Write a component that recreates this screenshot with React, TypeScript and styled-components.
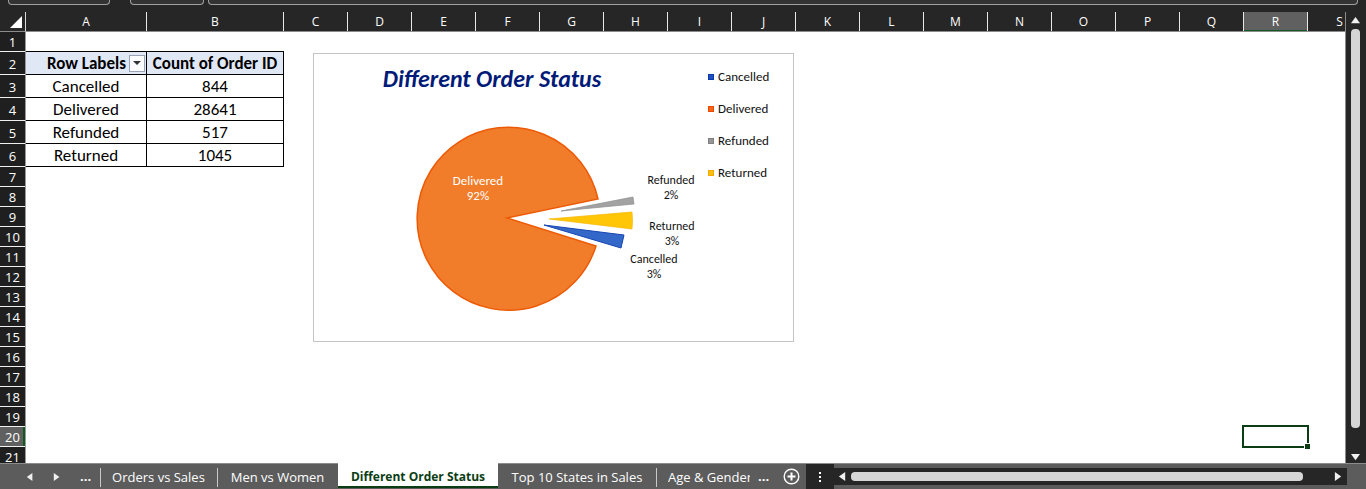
import React from 'react';
import styled, { createGlobalStyle } from 'styled-components';

const CALIBRI = "Calibri, Carlito, Lato, sans-serif";
const SEGOE = "'Segoe UI', 'Open Sans', 'Noto Sans', sans-serif";

const GlobalStyle = createGlobalStyle`
  *, *::before, *::after { box-sizing: border-box; }
  body { margin: 0; background: #262626; overflow: hidden; }
  button { font: inherit; color: inherit; border: 0; padding: 0; background: none; }
`;

const Window = styled.div`
  display: flex;
  flex-direction: column;
  height: 100vh;
  overflow: hidden;
  background: #262626;
  color: #fff;
  font-family: ${SEGOE};
`;

const FormulaBar = styled.header`
  display: flex;
  flex: none;
  height: 12px;
  padding: 0 8px 7px;
`;

const FormulaBox = styled.div<{ $width?: number; $gap?: number }>`
  flex: ${p => (p.$width ? `0 0 ${p.$width}px` : '1')};
  margin-right: ${p => p.$gap ?? 0}px;
  border: 1px solid #a0a0a0;
  border-top: 0;
  border-radius: 0 0 4px 4px;
  background: #333;
`;

const Workspace = styled.main`
  display: grid;
  grid-template-columns: minmax(0, 1fr) 21px;
  flex: 1;
  min-height: 0;
`;

const Sheet = styled.section`
  display: grid;
  grid-template-columns: 26px minmax(0, 1fr);
  grid-template-rows: 20px minmax(0, 1fr);
  overflow: hidden;
`;

const SelectAll = styled.button`
  display: flex;
  align-items: flex-end;
  justify-content: flex-end;
  padding: 0 3px 3px 0;
  border-right: 1px solid #d8d8d8;
  border-bottom: 1px solid #8c8c8c;
`;

const ColumnHeads = styled.div`
  display: flex;
  overflow: hidden;
  border-bottom: 1px solid #8c8c8c;
`;

const ColumnHead = styled.div<{ $width: number; $active?: boolean }>`
  flex: 0 0 ${p => p.$width}px;
  border-right: 1px solid #e8e8e8;
  background: ${p => (p.$active ? '#606060' : '#262626')};
  box-shadow: ${p => (p.$active ? 'inset 0 -1px #0f5a22' : 'none')};
  font-size: 12px;
  line-height: 19px;
  text-align: center;
`;

const RowHeads = styled.div`
  overflow: hidden;
  border-right: 1px solid #9a9a9a;
`;

const RowHead = styled.div<{ $tall: boolean; $active: boolean }>`
  height: ${p => (p.$tall ? 23 : 20)}px;
  border-bottom: 1px solid #f0f0f0;
  background: ${p => (p.$active ? '#606060' : '#1f1f1f')};
  box-shadow: ${p => (p.$active ? 'inset -2px 0 #0f5a22' : 'none')};
  font-size: 13px;
  line-height: ${p => (p.$tall ? 24 : 21)}px;
  text-align: center;
`;

const Canvas = styled.div`
  position: relative;
  display: flex;
  align-items: flex-start;
  gap: 29px;
  padding-top: 19px;
  overflow: hidden;
  background: #fff;
  color: #000;
  font-family: ${CALIBRI};
`;

const PivotTable = styled.table`
  flex: none;
  width: 258px;
  table-layout: fixed;
  border-collapse: separate;
  border-spacing: 0;
  border-top: 1px solid #000;
  font-size: 17px;
  line-height: 21px;
  text-align: center;

  th, td {
    height: 23px;
    padding: 1px 0 0;
    border-right: 1px solid #000;
    border-bottom: 1px solid #000;
    white-space: nowrap;
  }
  th { background: #e1e8f5; }
  tbody th { background: none; font-weight: 400; }
`;

const LabelHead = styled.div`
  display: flex;
  align-items: center;
  justify-content: flex-end;
  gap: 3px;
  padding-right: 1px;
`;

const FilterButton = styled.button`
  display: flex;
  align-items: center;
  justify-content: center;
  width: 16px;
  height: 17px;
  border: 1px solid #9aa3b5;
  background: #fbfcfe;
`;

const Chart = styled.figure`
  flex: none;
  width: 481px;
  margin: 2px 0 0;
  border: 1px solid #c4c4c4;

  svg { display: block; }
`;

const Selection = styled.div`
  position: absolute;
  left: 1216px;
  top: 393px;
  width: 67px;
  height: 23px;
  border: 2px solid #0b3d14;

  &::after {
    content: '';
    position: absolute;
    right: -3px;
    bottom: -3px;
    width: 6px;
    height: 6px;
    border: solid #fff;
    border-width: 1px 0 0 1px;
    background: #0b3d14;
  }
`;

const VerticalScroll = styled.div`
  display: flex;
  flex-direction: column;
  align-items: center;
  justify-content: space-between;
  padding: 4px 1px 1px 0;
  border-left: 1px solid #8c8c8c;
`;

const VerticalThumb = styled.div`
  flex: 1;
  width: 9px;
  margin: 4px 0 25px;
  border-radius: 4px;
  background: #d6d6d6;
`;

const BottomBar = styled.footer`
  display: flex;
  flex: none;
  height: 26px;
  border-top: 1px solid #8c8c8c;
  background: #5c5c5c;
  font-size: 13px;
`;

const TabNav = styled.div`
  display: flex;
  flex: 0 0 100px;
  align-items: center;
  padding: 0 0 0 26px;
  gap: 19px;
`;

const Tabs = styled.nav`
  display: flex;
  flex: none;
`;

const Tab = styled.button<{ $width: number; $active?: boolean; $divided?: boolean }>`
  position: relative;
  width: ${p => p.$width}px;
  height: 25px;
  margin-top: ${p => (p.$active ? -1 : 0)}px;
  padding-top: ${p => (p.$active ? 4 : 0)}px;
  border-bottom: ${p => (p.$active ? '2px solid #0b3d14' : '0')};
  background: ${p => (p.$active ? '#fff' : 'none')};
  color: ${p => (p.$active ? '#0b3d14' : '#fff')};
  font-size: ${p => (p.$active ? 12 : 13)}px;
  font-weight: ${p => (p.$active ? 700 : 400)};
  line-height: ${p => (p.$active ? 19 : 24)}px;
  text-align: center;
  white-space: nowrap;

  &::before {
    content: '';
    position: absolute;
    left: 0;
    top: 4px;
    width: 1px;
    height: 19px;
    background: ${p => (p.$divided ? '#c8c8c8' : 'transparent')};
  }
`;

const LastTabLabel = styled.span`
  display: block;
  margin-left: 12px;
  width: 82px;
  overflow: hidden;
  text-align: left;
`;

const More = styled.button`
  height: 25px;
  line-height: 25px;
  font-weight: 700;
`;

const TabTools = styled.div`
  display: flex;
  flex: 0 0 55px;
  align-items: center;
  justify-content: space-between;
  padding: 0 6px 0 7px;

  svg { display: block; }
`;

const Grip = styled.div`
  display: flex;
  flex: 0 0 28px;
  align-items: center;
  justify-content: center;
  background: #262626;
`;

const HorizontalScroll = styled.div`
  display: flex;
  flex: 1;
  align-items: center;
  height: 17px;
  margin: 4px 19px 0 0;
  padding: 0 4px;
  background: #262626;
`;

const HorizontalThumb = styled.div`
  flex: 1;
  height: 9px;
  margin: 0 31px 0 4px;
  border-radius: 4px;
  background: #d6d6d6;
`;

const ArrowIcon = styled.svg`
  display: block;
`;

const columns = [
  { name: 'A', width: 121 },
  { name: 'B', width: 137 },
  ...'CDEFGHIJKLMNOPQRS'.split('').map(name => ({ name, width: 64 })),
];

const rows = Array.from({ length: 21 }, (_, i) => i + 1);

const orders = [
  ['Cancelled', '844'],
  ['Delivered', '28641'],
  ['Refunded', '517'],
  ['Returned', '1045'],
];

const legend = [
  { name: 'Cancelled', fill: '#1f4fbf', edge: '#0a3aa8' },
  { name: 'Delivered', fill: '#f4641a', edge: '#e84a00' },
  { name: 'Refunded', fill: '#969696', edge: '#808080' },
  { name: 'Returned', fill: '#ffbf10', edge: '#f5a800' },
];

const sliceLabels = [
  { name: 'Delivered', share: '92%', x: 164, y: 131, color: '#fff', size: 13 },
  { name: 'Refunded', share: '2%', x: 357, y: 130, color: '#111', size: 12 },
  { name: 'Returned', share: '3%', x: 358, y: 176, color: '#111', size: 12 },
  { name: 'Cancelled', share: '3%', x: 340, y: 209, color: '#111', size: 12 },
];

type Direction = 'up' | 'down' | 'left' | 'right';
const arrowPaths: Record<Direction, string> = {
  up: 'M0 8L5 1L10 8Z',
  down: 'M0 1L10 1L5 8Z',
  left: 'M8 0L1 5L8 10Z',
  right: 'M1 0L8 5L1 10Z',
};

function Arrow({ to, size = 9 }: { to: Direction; size?: number }) {
  return (
    <ArrowIcon width={size} height={size} viewBox="0 0 10 10" aria-hidden="true">
      <path d={arrowPaths[to]} fill="#f0f0f0" />
    </ArrowIcon>
  );
}

function StatusChart() {
  return (
    <Chart>
      <svg width="479" height="287" fontFamily={CALIBRI} role="img" aria-label="Different Order Status">
        <text x="178" y="33" textAnchor="middle" fontSize="24" fontWeight="700" fontStyle="italic" fill="#001a78">
          Different Order Status
        </text>
        <path d="M193 164L284 145A91.5 91.5 0 1 0 282 192Z" fill="#f17d2b" stroke="#ed5a05" strokeWidth="1.5" />
        <path d="M247 157L319 143L320 150Z" fill="#a2a2a2" stroke="#8c8c8c" strokeWidth="0.7" />
        <path d="M235 165L318 158Q319 167 318 175Z" fill="#ffc608" stroke="#f8b500" strokeWidth="0.7" />
        <path d="M230 171L310 181L307 194Z" fill="#3468c8" stroke="#1746b4" strokeWidth="1" />
        {sliceLabels.map(label => (
          <text key={label.name} textAnchor="middle" fill={label.color} fontSize={label.size}>
            <tspan x={label.x} y={label.y}>{label.name}</tspan>
            <tspan x={label.x} y={label.y + 15}>{label.share}</tspan>
          </text>
        ))}
        {legend.map((item, i) => (
          <g key={item.name} fontSize="13">
            <rect x="394.5" y={20.5 + i * 32} width="5" height="5" fill={item.fill} stroke={item.edge} />
            <text x="404" y={27 + i * 32} fill="#111">{item.name}</text>
          </g>
        ))}
      </svg>
    </Chart>
  );
}

export default function App() {
  return (
    <Window>
      <GlobalStyle />
      <FormulaBar>
        <FormulaBox $width={102} $gap={20} />
        <FormulaBox $width={74} $gap={4} />
        <FormulaBox />
      </FormulaBar>
      <Workspace>
        <Sheet>
          <SelectAll aria-label="Select all">
            <svg width="12" height="12" aria-hidden="true"><path d="M12 0V12H0Z" fill="#fff" /></svg>
          </SelectAll>
          <ColumnHeads>
            {columns.map(c => (
              <ColumnHead key={c.name} $width={c.width} $active={c.name === 'R'}>{c.name}</ColumnHead>
            ))}
          </ColumnHeads>
          <RowHeads>
            {rows.map(n => (
              <RowHead key={n} $tall={n > 1 && n < 7} $active={n === 20}>{n}</RowHead>
            ))}
          </RowHeads>
          <Canvas>
            <PivotTable>
              <colgroup><col width="121" /><col width="137" /></colgroup>
              <thead>
                <tr>
                  <th scope="col">
                    <LabelHead>
                      Row Labels
                      <FilterButton aria-label="Filter row labels">
                        <svg width="8" height="5" aria-hidden="true"><path d="M0 0H8L4 4Z" fill="#333" /></svg>
                      </FilterButton>
                    </LabelHead>
                  </th>
                  <th scope="col">Count of Order ID</th>
                </tr>
              </thead>
              <tbody>
                {orders.map(([status, count]) => (
                  <tr key={status}><th scope="row">{status}</th><td>{count}</td></tr>
                ))}
              </tbody>
            </PivotTable>
            <StatusChart />
            <Selection />
          </Canvas>
        </Sheet>
        <VerticalScroll>
          <Arrow to="up" />
          <VerticalThumb />
          <Arrow to="down" />
        </VerticalScroll>
      </Workspace>
      <BottomBar>
        <TabNav>
          <button aria-label="Previous sheet"><Arrow to="left" size={8} /></button>
          <button aria-label="Next sheet"><Arrow to="right" size={8} /></button>
          <More>...</More>
        </TabNav>
        <Tabs>
          <Tab $width={117} $divided>Orders vs Sales</Tab>
          <Tab $width={121} $divided>Men vs Women</Tab>
          <Tab $width={160} $active>Different Order Status</Tab>
          <Tab $width={158}>Top 10 States in Sales</Tab>
          <Tab $width={95} $divided><LastTabLabel>Age &amp; Gender</LastTabLabel></Tab>
        </Tabs>
        <TabTools>
          <More>...</More>
          <button aria-label="New sheet">
            <svg width="17" height="17" fill="none" stroke="#fff" aria-hidden="true">
              <circle cx="8.5" cy="8.5" r="7.3" strokeWidth="1.4" />
              <path d="M8.5 4.5V12.5M4.5 8.5H12.5" strokeWidth="2" />
            </svg>
          </button>
        </TabTools>
        <Grip>
          <svg width="2" height="10" fill="#fff" aria-hidden="true">
            <path d="M0 0H2V2H0ZM0 4H2V6H0ZM0 8H2V10H0Z" />
          </svg>
        </Grip>
        <HorizontalScroll>
          <Arrow to="left" />
          <HorizontalThumb />
          <Arrow to="right" />
        </HorizontalScroll>
      </BottomBar>
    </Window>
  );
}
